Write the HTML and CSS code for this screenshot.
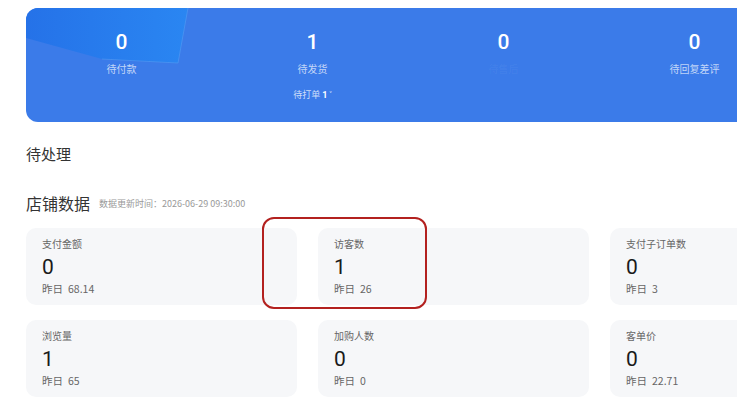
FILE: index.html
```html
<!DOCTYPE html>
<html>
<head>
    <title>店铺首页</title>
    <link rel="stylesheet" href="styles.css">
</head>
<body>
    <div class="page">
        <div class="banner">
            <svg class="banner-deco" width="170" height="60" viewBox="0 0 170 60">
                <defs>
                    <linearGradient id="deco" x1="0" y1="0" x2="1" y2="0">
                        <stop offset="0" stop-color="#2572e8"/>
                        <stop offset="1" stop-color="#2a86f2"/>
                    </linearGradient>
                </defs>
                <polygon points="0,0 162,0 152,55 76,51 0,30" fill="url(#deco)"/>
                <polyline points="162,0 152,55 76,51" fill="none" stroke="#5aa2f6" stroke-width="1" opacity="0.5"/>
            </svg>
            <div class="todo-item">
                <div class="todo-num">0</div>
                <div class="todo-label">待付款</div>
            </div>
            <div class="todo-item">
                <div class="todo-num">1</div>
                <div class="todo-label">待发货</div>
                <div class="todo-sub">待打单 <b>1</b> <span class="caret">˅</span></div>
            </div>
            <div class="todo-item">
                <div class="todo-num">0</div>
                <div class="todo-label hidden-label">待售后</div>
            </div>
            <div class="todo-item">
                <div class="todo-num">0</div>
                <div class="todo-label">待回复差评</div>
            </div>
        </div>

        <h3 class="section-title">待处理</h3>

        <div class="data-header">
            <h3 class="data-title">店铺数据</h3>
            <span class="update-time">数据更新时间：2026-06-29 09:30:00</span>
        </div>

        <div class="stat-grid">
            <div class="stat-card">
                <div class="stat-label">支付金额</div>
                <div class="stat-num">0</div>
                <div class="stat-prev">昨日<span>68.14</span></div>
            </div>
            <div class="stat-card">
                <div class="stat-label">访客数</div>
                <div class="stat-num">1</div>
                <div class="stat-prev">昨日<span>26</span></div>
            </div>
            <div class="stat-card">
                <div class="stat-label">支付子订单数</div>
                <div class="stat-num">0</div>
                <div class="stat-prev">昨日<span>3</span></div>
            </div>
            <div class="stat-card">
                <div class="stat-label">浏览量</div>
                <div class="stat-num">1</div>
                <div class="stat-prev">昨日<span>65</span></div>
            </div>
            <div class="stat-card">
                <div class="stat-label">加购人数</div>
                <div class="stat-num">0</div>
                <div class="stat-prev">昨日<span>0</span></div>
            </div>
            <div class="stat-card">
                <div class="stat-label">客单价</div>
                <div class="stat-num">0</div>
                <div class="stat-prev">昨日<span>22.71</span></div>
            </div>
        </div>
    </div>

    <div class="highlight"></div>
</body>
</html>
```

FILE: styles.css
```css
body {
    margin: 0;
    background-color: #ffffff;
    font-family: "Noto Sans CJK SC", "Noto Sans", sans-serif;
    overflow: hidden;
}

.page {
    width: 711px;
    padding: 8px 0 0 26px;
    overflow: hidden;
}

.banner {
    position: relative;
    width: 764px;
    height: 114px;
    background-color: #3b7be9;
    border-radius: 12px 0 0 12px;
    display: grid;
    grid-template-columns: repeat(4, 191px);
    overflow: hidden;
}

.banner-deco {
    position: absolute;
    top: 0;
    left: 0;
}

.todo-item {
    position: relative;
    display: flex;
    flex-direction: column;
    align-items: center;
    padding-top: 23px;
}

.todo-num {
    font-family: Roboto, "Noto Sans", sans-serif;
    font-weight: 500;
    font-size: 21px;
    line-height: 22px;
    color: #ffffff;
}

.todo-label {
    margin-top: 9px;
    font-size: 10px;
    line-height: 14px;
    color: rgba(255, 255, 255, 0.7);
}

.hidden-label {
    color: rgba(255, 255, 255, 0.06);
}

.todo-sub {
    margin-top: 12px;
    font-size: 9px;
    line-height: 14px;
    color: rgba(255, 255, 255, 0.75);
}

.todo-sub b {
    font-family: Roboto, sans-serif;
    color: #ffffff;
}

.caret {
    font-size: 8px;
    color: #ffffff;
}

.section-title {
    margin: 22px 0 0;
    font-size: 15px;
    line-height: 20px;
    font-weight: 400;
    color: #333333;
}

.data-header {
    display: flex;
    align-items: center;
    gap: 9px;
    margin-top: 28px;
}

.data-title {
    margin: 0;
    font-size: 16px;
    line-height: 22px;
    font-weight: 400;
    color: #333333;
}

.update-time {
    font-size: 9px;
    color: #999999;
}

.stat-grid {
    display: grid;
    grid-template-columns: repeat(3, 271px);
    column-gap: 21px;
    row-gap: 15px;
    width: 855px;
    margin-top: 14px;
}

.stat-card {
    height: 77px;
    box-sizing: border-box;
    padding: 9px 16px 0;
    background-color: #f6f7f9;
    border-radius: 10px;
}

.stat-label {
    font-size: 10px;
    line-height: 14px;
    color: #666666;
}

.stat-num {
    margin-top: 4px;
    font-family: Roboto, "Noto Sans", sans-serif;
    font-size: 21px;
    line-height: 24px;
    color: #1a1a1a;
}

.stat-prev {
    margin-top: 3px;
    font-size: 10.5px;
    line-height: 14px;
    color: #666666;
}

.stat-prev span {
    margin-left: 5px;
}

.highlight {
    position: absolute;
    left: 262px;
    top: 217px;
    width: 161px;
    height: 88px;
    border: 2px solid #b3211f;
    border-radius: 12px;
}
```
